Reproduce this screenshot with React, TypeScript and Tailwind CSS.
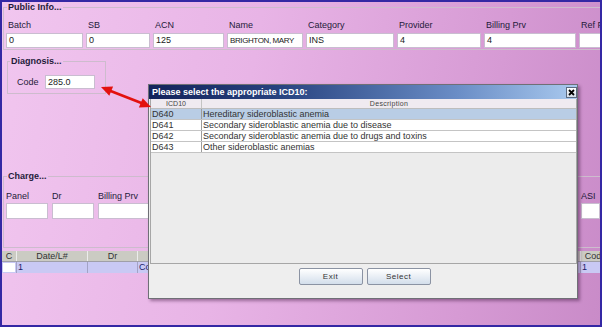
const publicCols = [
  { label: 'Batch', value: '0', w: 'w-[77px]', tight: false },
  { label: 'SB', value: '0', w: 'w-[64px]', tight: false },
  { label: 'ACN', value: '125', w: 'w-[71px]', tight: false },
  { label: 'Name', value: 'BRIGHTON, MARY', w: 'w-[76px]', tight: true },
  { label: 'Category', value: 'INS', w: 'w-[88px]', tight: false },
  { label: 'Provider', value: '4', w: 'w-[84px]', tight: false },
  { label: 'Billing Prv', value: '4', w: 'w-[92px]', tight: false },
  { label: 'Ref Prv', value: '', w: 'w-[60px]', tight: false },
];

const chargeCols = [
  { label: 'Panel', w: 'w-[42px]' },
  { label: 'Dr', w: 'w-[42px]' },
  { label: 'Billing Prv', w: 'w-[60px]' },
];

const icdRows = [
  { code: 'D640', desc: 'Hereditary sideroblastic anemia', selected: true },
  { code: 'D641', desc: 'Secondary sideroblastic anemia due to disease', selected: false },
  { code: 'D642', desc: 'Secondary sideroblastic anemia due to drugs and toxins', selected: false },
  { code: 'D643', desc: 'Other sideroblastic anemias', selected: false },
];

const chargeTable = [
  { head: 'C', w: 'w-[15px]' },
  { head: 'Date/L#', w: 'w-[71px]' },
  { head: 'Dr', w: 'w-[50px]' },
  { head: 'Code', w: 'w-[120px]' },
  { head: 'Mod', w: 'w-[150px]' },
  { head: 'Units', w: 'w-[173px]' },
  { head: 'Code', w: 'w-[30px]' },
];

function Field({ value, className }: { value?: string; className: string }) {
  return (
    <div
      className={`bg-white border border-[#c9bdd0] leading-[13px] pl-[2px] text-[#222] overflow-hidden whitespace-nowrap ${className}`}
    >
      {value}
    </div>
  );
}

export default function App() {
  return (
    <div className="relative w-[602px] h-[327px] overflow-hidden border-2 border-[#3428a4] bg-[linear-gradient(100deg,#f1c6ef_0%,#e8b4e6_40%,#d69ad4_78%,#c98bc8_100%)] font-['Liberation_Sans',Arial,sans-serif] text-[#1f1b3a]">
      {/* Public Info */}
      <fieldset className="ml-[1px] w-[640px] border border-[#cdbccd] pb-[1px]">
        <legend className="ml-[3px] px-[1px] text-[9px] leading-[11px] font-bold">Public Info...</legend>
        <div className="flex gap-[3px] pl-[2px] pt-[7px]">
          {publicCols.map((c) => (
            <div key={c.label} className={`flex flex-col shrink-0 ${c.w}`}>
              <span className="pl-[2px] text-[9px] leading-[11px] whitespace-nowrap">{c.label}</span>
              <Field
                value={c.value}
                className={`mt-[2px] h-[15px] ${c.tight ? 'text-[8px] tracking-[-0.4px]' : 'text-[9px]'}`}
              />
            </div>
          ))}
        </div>
      </fieldset>

      {/* Diagnosis */}
      <fieldset className="ml-[5px] mt-[6px] w-[99px] border border-[#cdbccd] pb-[4px]">
        <legend className="ml-[2px] px-[1px] text-[9px] leading-[11px] font-bold">Diagnosis...</legend>
        <div className="flex items-center pl-[9px] pt-[8px]">
          <span className="w-[28px] text-[9px] leading-[11px]">Code</span>
          <Field value="285.0" className="w-[50px] h-[14px] text-[9px] leading-[12px]" />
        </div>
      </fieldset>

      {/* Charge */}
      <fieldset className="ml-[1px] mt-[77px] w-[640px] border border-[#cdbccd] pb-[28px]">
        <legend className="ml-[3px] px-[1px] text-[9px] leading-[11px] font-bold">Charge...</legend>
        <div className="flex gap-[4px] w-[596px] pl-[2px] pt-[9px]">
          {chargeCols.map((c) => (
            <div key={c.label} className={`flex flex-col shrink-0 ${c.w}`}>
              <span className="text-[9px] leading-[11px] whitespace-nowrap">{c.label}</span>
              <Field className="mt-[1px] h-[16px]" />
            </div>
          ))}
          <div className="ml-auto flex flex-col w-[19px]">
            <span className="text-[9px] leading-[11px]">ASI</span>
            <Field className="mt-[1px] h-[16px]" />
          </div>
        </div>
      </fieldset>

      {/* Charge lines table */}
      <div className="mt-[3px] flex flex-col w-[640px]">
        <div className="flex h-[11px] bg-[#cbcbc3] border-b border-[#9f9fa8]">
          {chargeTable.map((c, i) => (
            <div
              key={i}
              className={`${c.w} shrink-0 border-r border-[#ececec] text-center text-[9px] leading-[11px] text-[#333] overflow-hidden whitespace-nowrap`}
            >
              {c.head}
            </div>
          ))}
        </div>
        <div className="flex h-[11px] bg-[#c9c9f4]">
          {chargeTable.map((c, i) => (
            <div
              key={i}
              className={`${c.w} shrink-0 border-r border-[#a3a3c6] text-[9px] leading-[11px] text-[#1c1c6a] overflow-hidden whitespace-nowrap pl-[1px]`}
            >
              {i === 0 ? <div className="mt-[1px] h-[9px] w-[12px] bg-white" /> : i === 1 || i === 6 ? '1' : i === 3 ? 'Code' : ''}
            </div>
          ))}
        </div>
      </div>

      {/* ICD10 dialog */}
      <div className="absolute left-[146px] top-[82px] w-[430px] h-[215px] flex flex-col border border-[#6f6f76] bg-[#eeeeee] shadow-[2px_2px_3px_rgba(60,20,60,0.45)]">
        <div className="flex items-center h-[14px] shrink-0 bg-[linear-gradient(to_right,#13235a_0%,#27427f_30%,#6a8dc6_72%,#a9c9ee_100%)]">
          <span className="pl-[3px] text-[9px] leading-[14px] font-bold text-white whitespace-nowrap">
            Please select the appropriate ICD10:
          </span>
          <div className="ml-auto flex items-center justify-center w-[11px] h-[11px] border border-[#5b6a80] bg-[linear-gradient(#ffffff,#d4dde8)]">
            <svg width="7" height="7" viewBox="0 0 7 7">
              <path d="M1 1 L6 6 M6 1 L1 6" stroke="#000" strokeWidth="1.8" />
            </svg>
          </div>
        </div>

        <div className="ml-[1px] w-[427px] h-[165px] shrink-0 flex flex-col border-x border-b border-[#a6a6a6] bg-[#ececec]">
          <div className="flex h-[10px] shrink-0 bg-[#efeaf0] border-b border-[#bdbdbd]">
            <div className="w-[51px] border-r border-[#c4c4c4] text-center text-[7px] leading-[10px] text-[#444]">ICD10</div>
            <div className="flex-1 text-center text-[7px] leading-[10px] text-[#444] tracking-[0.3px]">Description</div>
          </div>
          {icdRows.map((r) => (
            <div
              key={r.code}
              className={`flex h-[11px] shrink-0 border-b border-[#c4c4c4] ${r.selected ? 'bg-[#b9cde5]' : 'bg-white'}`}
            >
              <div className="w-[51px] border-r border-[#9c9c9c] pl-[1px] text-[9px] leading-[10px] text-[#333]">{r.code}</div>
              <div className="flex-1 pl-[1px] text-[9px] leading-[10px] text-[#333] whitespace-nowrap">{r.desc}</div>
            </div>
          ))}
        </div>

        <div className="mt-[4px] flex justify-center gap-[4px] pl-[3px]">
          {['Exit', 'Select'].map((b) => (
            <button
              key={b}
              className="w-[64px] h-[17px] border border-[#8b93a3] rounded-[2px] bg-[linear-gradient(#ffffff,#d3deeb)] text-[8px] leading-[15px] tracking-[0.5px] text-[#333]"
            >
              {b}
            </button>
          ))}
        </div>
      </div>

      {/* red pointer arrow */}
      <svg className="absolute left-[-2px] top-[-2px] pointer-events-none" width="602" height="327" viewBox="0 0 602 327">
        <line x1="110" y1="90.7" x2="142" y2="103.3" stroke="#e3120f" strokeWidth="2.6" />
        <polygon points="101,87 109.3,95.7 113.1,86.5" fill="#e3120f" />
        <polygon points="151,107 138.9,107.5 142.7,98.3" fill="#e3120f" />
      </svg>
    </div>
  );
}
